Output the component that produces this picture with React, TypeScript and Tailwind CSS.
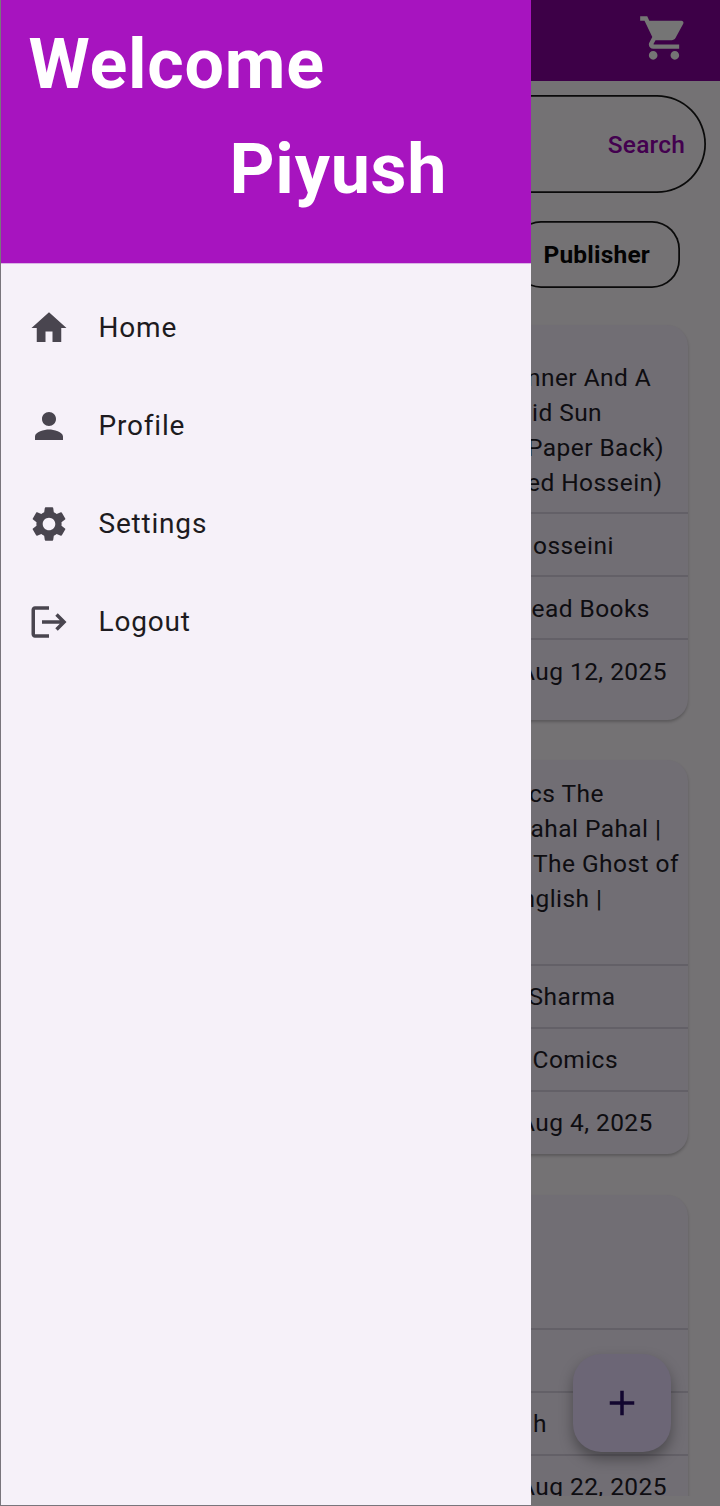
import { MdAdd, MdHome, MdLogout, MdPerson, MdSettings, MdShoppingCart } from 'react-icons/md';
import type { IconType } from 'react-icons';

const menu: { label: string; Icon: IconType }[] = [
  { label: 'Home', Icon: MdHome },
  { label: 'Profile', Icon: MdPerson },
  { label: 'Settings', Icon: MdSettings },
  { label: 'Logout', Icon: MdLogout },
];

type Line = { text: string; indent: string };

function Row({ line, className }: { line: Line; className: string }) {
  return (
    <div className={`flex items-start border-t-2 border-[#636067] ${className}`}>
      <span className={line.indent}>{line.text}</span>
    </div>
  );
}

function BookCard({ title, rows, className, titleClass, rowClass, lastClass }: {
  title: Line[];
  rows: Line[];
  className: string;
  titleClass: string;
  rowClass: string;
  lastClass: string;
}) {
  return (
    <article className={`mr-[32px] ml-[31px] flex shrink-0 flex-col rounded-[21px] bg-[#716e74] shadow-[0_2px_3px_rgba(0,0,0,0.22)] ${className}`}>
      <div className={titleClass}>
        {title.map((line) => (
          <p key={line.text} className={line.indent}>{line.text}</p>
        ))}
      </div>
      {rows.map((line, i) => (
        <Row key={i} line={line} className={i === rows.length - 1 ? lastClass : rowClass} />
      ))}
    </article>
  );
}

function Drawer() {
  return (
    <aside className="absolute top-0 left-0 flex h-[1506px] w-[531px] flex-col border-b border-l border-[#79757c] bg-[#f6f1f9]">
      <header className="flex h-[264px] shrink-0 flex-col border-b border-[#d9b3e5] bg-[#a714bf] pt-[23px] text-[70px] leading-[82px] font-bold text-white">
        <span className="pl-[27.5px] tracking-[0.75px]">Welcome</span>
        <span className="mt-[23px] pl-[228.5px] tracking-[0.75px]">Piyush</span>
      </header>
      <nav className="mt-[15px] flex flex-col">
        {menu.map(({ label, Icon }) => (
          <a key={label} className="flex h-[98px] items-center gap-[28.5px] pl-[27px] text-[28px] tracking-[0.8px] text-[#1d1b20]">
            <Icon className="size-[42px] text-[#49454f]" />
            {label}
          </a>
        ))}
      </nav>
    </aside>
  );
}

export default function App() {
  return (
    <div className="relative h-[1506px] w-[720px] overflow-hidden bg-[#747274] font-[Roboto,sans-serif]">
      <main className="flex h-[1496px] flex-col overflow-hidden text-[24.5px] leading-[35px] tracking-[0.44px] whitespace-nowrap text-[#0e0d11]">
        <header className="flex h-[81px] shrink-0 justify-end bg-[#3d0047] pt-[12px] pr-[30px]">
          <MdShoppingCart className="size-[52px] text-[#757575]" />
        </header>
        <div className="mx-[14px] mt-[14px] flex h-[98px] shrink-0 items-center justify-end rounded-full pr-[21px] font-medium tracking-[0.2px] text-[#43004f] shadow-[inset_0_0_0_1.75px_#0a0a0a]">
          Search
        </div>
        <div className="mt-[28px] mr-[40.5px] flex h-[66.5px] shrink-0 items-center self-end rounded-[28px] pr-[29.5px] pl-[30px] font-bold tracking-[0.2px] text-[#030303] shadow-[inset_0_0_0_1.75px_#0a0a0a]">
          Publisher
        </div>
        <BookCard
          className="mt-[37.5px] h-[395px]"
          titleClass="h-[187px] pt-[35px]"
          rowClass="h-[63px] pt-[14px]"
          lastClass="h-[66px] pt-[14px]"
          title={[
            { text: 'nner And A', indent: 'pl-[496px]' },
            { text: 'id Sun', indent: 'pl-[501px]' },
            { text: 'Paper Back)', indent: 'pl-[496px]' },
            { text: 'ed Hossein)', indent: 'pl-[496px]' },
          ]}
          rows={[
            { text: 'osseini', indent: 'pl-[502px]' },
            { text: 'ead Books', indent: 'pl-[500.5px]' },
            { text: 'Aug 12, 2025', indent: 'pl-[488px]' },
          ]}
        />
        <BookCard
          className="mt-[40px] h-[394px]"
          titleClass="h-[204px] pt-[16px]"
          rowClass="h-[63px] pt-[13px]"
          lastClass="h-[64px] pt-[13px]"
          title={[
            { text: 'cs The', indent: 'pl-[498px]' },
            { text: 'ahal Pahal |', indent: 'pl-[499.5px]' },
            { text: 'The Ghost of', indent: 'pl-[502px]' },
            { text: 'nglish |', indent: 'pl-[490.5px]' },
          ]}
          rows={[
            { text: 'Sharma', indent: 'pl-[497.5px]' },
            { text: 'Comics', indent: 'pl-[501.5px]' },
            { text: 'Aug 4, 2025', indent: 'pl-[488px]' },
          ]}
        />
        <BookCard
          className="mt-[41px] h-[394px]"
          titleClass="h-[133px]"
          rowClass="h-[63px] pt-[13px]"
          lastClass="h-[64px] pt-[13px]"
          title={[]}
          rows={[
            { text: '', indent: 'pl-[500px]' },
            { text: 'h', indent: 'pl-[502px]' },
            { text: 'Aug 22, 2025', indent: 'pl-[488px]' },
          ]}
        />
      </main>
      <button className="absolute top-[1354px] left-[573px] flex size-[98px] items-center justify-center rounded-[28px] bg-[#6c6676] text-[#12062f] shadow-[0_7px_14px_rgba(0,0,0,0.34)]">
        <MdAdd className="size-[42px]" />
      </button>
      <Drawer />
    </div>
  );
}
